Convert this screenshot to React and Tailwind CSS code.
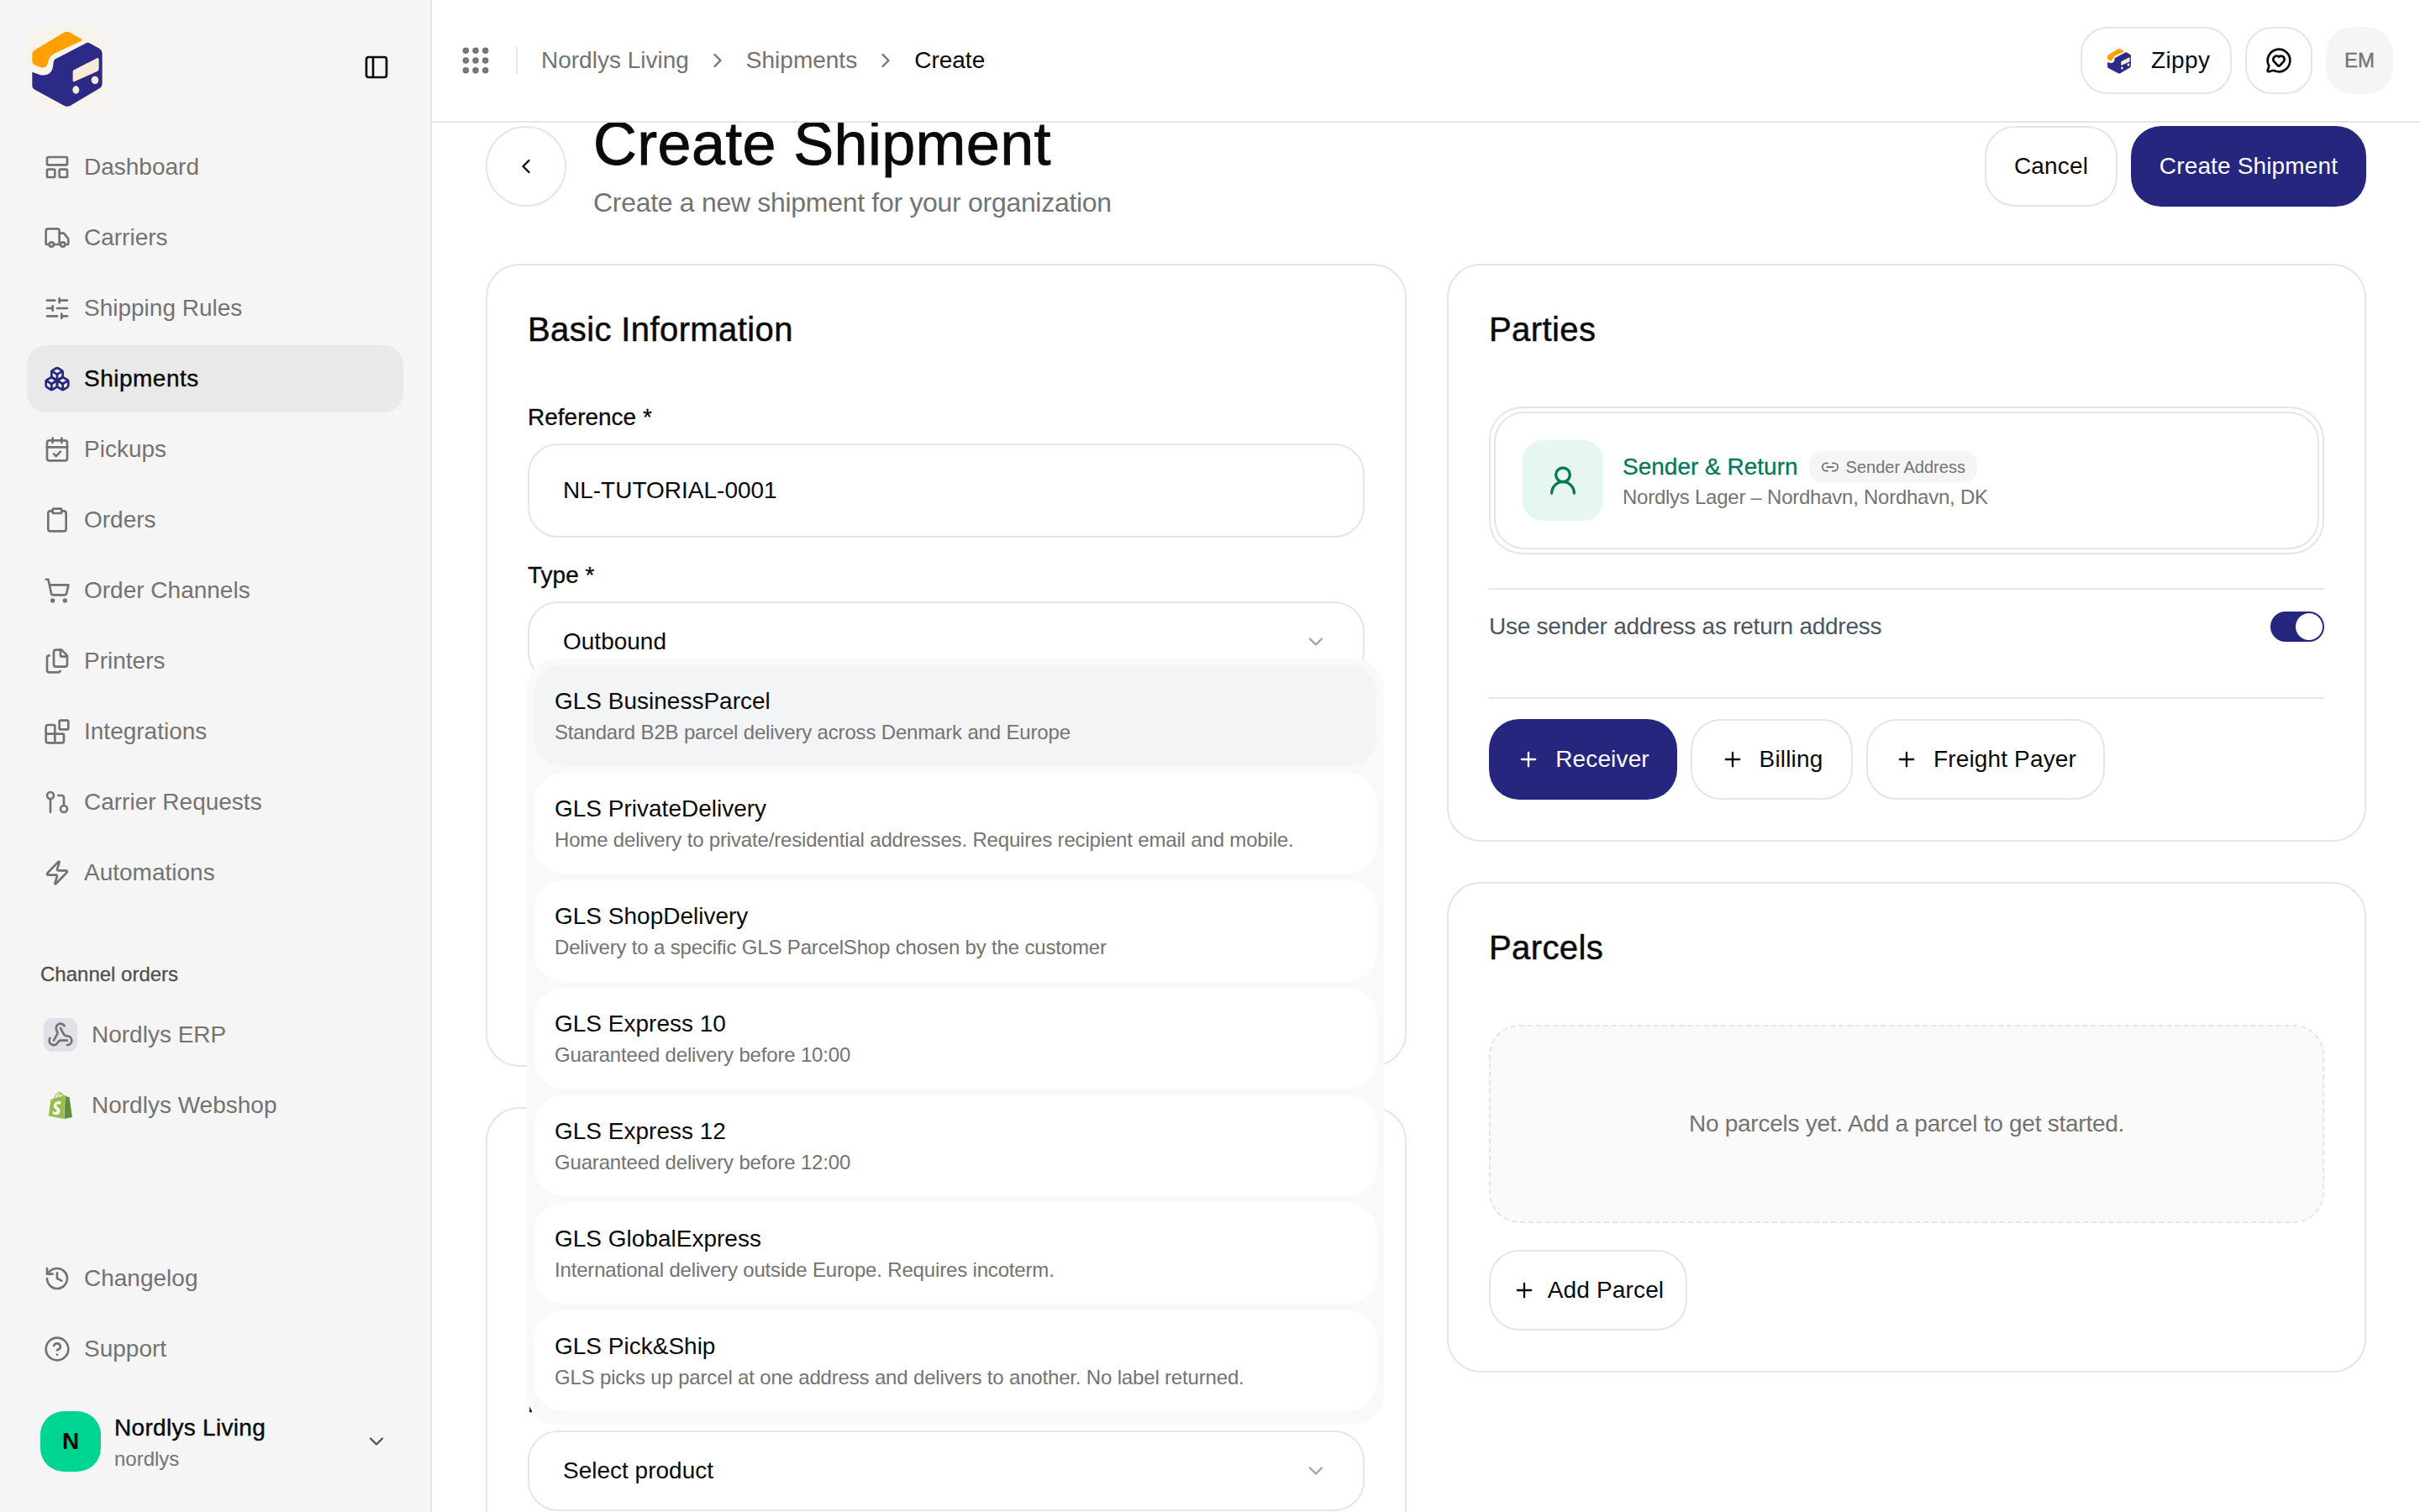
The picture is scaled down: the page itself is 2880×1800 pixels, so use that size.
import {
  LayoutPanelTop, Truck, SlidersHorizontal, Boxes, CalendarCheck, Clipboard, ShoppingCart, Files, Blocks,
  GitPullRequest, Zap, History, CircleHelp, Webhook, PanelLeft, Grip, ChevronRight, ChevronLeft, ChevronDown,
  MessageCircleHeart, UserRound, Link2, Plus,
} from 'lucide-react';

const navItems = [
  { label: 'Dashboard', icon: LayoutPanelTop },
  { label: 'Carriers', icon: Truck },
  { label: 'Shipping Rules', icon: SlidersHorizontal },
  { label: 'Shipments', icon: Boxes, active: true },
  { label: 'Pickups', icon: CalendarCheck },
  { label: 'Orders', icon: Clipboard },
  { label: 'Order Channels', icon: ShoppingCart },
  { label: 'Printers', icon: Files },
  { label: 'Integrations', icon: Blocks },
  { label: 'Carrier Requests', icon: GitPullRequest },
  { label: 'Automations', icon: Zap },
];

const products = [
  { name: 'GLS BusinessParcel', desc: 'Standard B2B parcel delivery across Denmark and Europe', active: true },
  { name: 'GLS PrivateDelivery', desc: 'Home delivery to private/residential addresses. Requires recipient email and mobile.' },
  { name: 'GLS ShopDelivery', desc: 'Delivery to a specific GLS ParcelShop chosen by the customer' },
  { name: 'GLS Express 10', desc: 'Guaranteed delivery before 10:00' },
  { name: 'GLS Express 12', desc: 'Guaranteed delivery before 12:00' },
  { name: 'GLS GlobalExpress', desc: 'International delivery outside Europe. Requires incoterm.' },
  { name: 'GLS Pick&Ship', desc: 'GLS picks up parcel at one address and delivers to another. No label returned.' },
];

function Logo({ className, glow }) {
  return (
    <svg viewBox="36 36 288 288" className={className}>
      {glow && <rect x="36" y="36" width="288" height="288" rx="30" fill="#f8f3ec" />}
      <path d="M55 135 Q55 122 68 116 L168 56 Q178 50 190 56 L232 80 Q235 84 228 87 L138 129 Q116 140 112 160 Q108 186 85 181 L62 171 Q55 167 55 160 Z" fill="#ff9f00" />
      <path d="M135 152 L245 95 Q254 90 262 95 L296 114 Q305 120 305 130 L305 238 Q305 250 295 256 L190 318 Q180 323 170 318 L64 260 Q55 255 55 245 L55 197 L84 208 Q126 214 130 172 Q130 160 135 152 Z" fill="#2d2a87" />
      <path d="M204 190 L286 148 Q293 145 293 152 L293 186 Q293 192 287 195 L206 231 Q200 233 200 227 L200 196 Q200 192 204 190 Z" fill="#f8ecd8" />
      <ellipse cx="211" cy="261" rx="12" ry="14" fill="#f8ecd8" />
      <ellipse cx="279" cy="226" rx="13" ry="14" fill="#f8ecd8" />
    </svg>
  );
}

function ShopifyIcon() {
  return (
    <svg viewBox="0 0 24 24" className="w-[32px] h-[32px]">
      <path fill="#5e8e3e" d="M15.337 23.979l7.216-1.561s-2.604-17.613-2.625-17.73c-.018-.116-.114-.192-.211-.192s-1.929-.136-1.929-.136-1.275-1.274-1.439-1.411c-.045-.037-.075-.057-.121-.074l-.914 21.104h.023z" />
      <path fill="#95bf47" d="M11.71 11.305s-.81-.424-1.774-.424c-1.447 0-1.504.906-1.504 1.141 0 1.232 3.24 1.715 3.24 4.629 0 2.295-1.44 3.76-3.406 3.76-2.354 0-3.54-1.465-3.54-1.465l.646-2.086s1.245 1.066 2.28 1.066c.675 0 .975-.545.975-.932 0-1.619-2.654-1.694-2.654-4.359-.034-2.237 1.571-4.416 4.827-4.416 1.257 0 1.875.361 1.875.361l-.945 2.715-.02.01zM11.17.83c.136 0 .271.038.405.135-.984.465-2.064 1.639-2.508 3.992-.656.213-1.293.405-1.889.578C7.697 3.75 8.951.84 11.17.84V.83zm1.235 2.949v.135c-.754.232-1.583.484-2.394.736.466-1.777 1.333-2.645 2.085-2.971.193.501.309 1.176.309 2.1zm.539-2.234c.694.074 1.141.867 1.429 1.755-.349.114-.735.231-1.158.366v-.252c0-.752-.096-1.371-.271-1.871v.002zm2.992 1.289c-.02 0-.06.021-.078.021s-.289.075-.714.21c-.423-1.233-1.176-2.37-2.508-2.37h-.115C12.135.209 11.669 0 11.265 0 8.159 0 6.675 3.877 6.21 5.846c-1.194.365-2.063.636-2.16.674-.675.213-.694.232-.772.87-.075.462-1.83 14.063-1.83 14.063L15.009 24l.927-21.166z" />
    </svg>
  );
}

function NavItem({ label, icon: Icon, active }) {
  return (
    <div className={`flex items-center gap-4 h-20 px-5 rounded-[24px] text-[28px] ${active ? 'bg-[#e9e9e9] text-[#0a0a0a] tracking-[0.5px] [-webkit-text-stroke:0.4px]' : 'text-[#737373]'}`}>
      <Icon size={32} strokeWidth={2} className={active ? 'text-[#26267e]' : 'text-[#737373]'} />
      <span>{label}</span>
    </div>
  );
}

function Button({ children, primary, className = '' }) {
  return (
    <div className={`flex items-center justify-center h-24 rounded-[36px] text-[28px] tracking-[0.15px] ${primary ? 'bg-[#26267e] text-white' : 'bg-white border-2 border-[#e5e5e5] text-[#0a0a0a]'} ${className}`}>
      {children}
    </div>
  );
}

function Select({ value }) {
  return (
    <div className="flex items-center justify-between h-24 pl-[40px] pr-[42px] rounded-[36px] border-2 border-[#e5e5e5] bg-white text-[28px] text-[#0a0a0a]">
      <span>{value}</span>
      <ChevronDown size={28} strokeWidth={2} className="text-[#a3a3a3]" />
    </div>
  );
}

function Label({ children }) {
  return <div className="h-10 mb-[11px] flex items-center text-[28px] text-[#0a0a0a] [-webkit-text-stroke:0.3px]">{children}</div>;
}

function CardTitle({ children }) {
  return <h2 className="h-14 flex items-center text-[40px] tracking-[0.4px] text-[#0a0a0a] [-webkit-text-stroke:0.5px]">{children}</h2>;
}

export default function App() {
  return (
    <div className="flex w-[2880px] h-[1800px] overflow-hidden bg-white font-['Liberation_Sans',sans-serif] text-[#0a0a0a]">
      {/* sidebar */}
      <aside className="flex flex-col w-[514px] h-full shrink-0 bg-[#f5f5f5] border-r-2 border-[#e5e5e5] pb-[48px]">
        <div className="flex items-center justify-between pt-8 pl-8 pr-[48px]">
          <Logo glow className="w-24 h-24" />
          <PanelLeft size={32} strokeWidth={2} className="text-[#0a0a0a]" />
        </div>
        <nav className="flex flex-col gap-1 mt-[31px] px-8">
          {navItems.map((item) => (
            <NavItem key={item.label} {...item} />
          ))}
        </nav>
        <div className="mt-[65px] pl-[48px] h-8 flex items-center text-[24px] text-[#4f4f4f] [-webkit-text-stroke:0.3px]">Channel orders</div>
        <div className="flex flex-col gap-1 mt-[16px] px-8">
          <div className="flex items-center gap-[17px] h-20 px-5 text-[28px] text-[#737373]">
            <div className="flex items-center justify-center w-10 h-10 rounded-[10px] bg-[#e1e1ea]">
              <Webhook size={32} strokeWidth={2} className="text-[#737373]" />
            </div>
            <span>Nordlys ERP</span>
          </div>
          <div className="flex items-center gap-[17px] h-20 px-5 text-[28px] text-[#737373]">
            <div className="flex items-center justify-center w-10 h-10">
              <ShopifyIcon />
            </div>
            <span>Nordlys Webshop</span>
          </div>
        </div>
        <div className="flex-1" />
        <div className="flex flex-col gap-1 px-8">
          <NavItem label="Changelog" icon={History} />
          <NavItem label="Support" icon={CircleHelp} />
        </div>
        <div className="flex items-center h-[72px] mt-[34px] pl-[48px] pr-[50px]">
          <div className="flex items-center justify-center w-[72px] h-[72px] rounded-[28px] bg-[#00d492] text-[28px] font-bold text-[#0a0a0a]">N</div>
          <div className="ml-[16px] mt-[4px] flex-1">
            <div className="text-[28px] leading-[38px] tracking-[0.3px] text-[#0a0a0a] [-webkit-text-stroke:0.4px]">Nordlys Living</div>
            <div className="text-[24px] leading-[36px] text-[#737373]">nordlys</div>
          </div>
          <ChevronDown size={28} strokeWidth={2} className="text-[#525252]" />
        </div>
      </aside>

      <div className="flex flex-col flex-1 min-w-0 h-full">
        {/* top bar */}
        <header className="flex items-center justify-between h-[146px] shrink-0 border-b-2 border-[#e5e5e5] bg-white pl-[32px] pr-[32px]">
          <div className="flex items-center text-[28px]">
            <Grip size={40} strokeWidth={2.5} className="text-[#737373]" />
            <div className="w-[2px] h-8 bg-[#e5e5e5] ml-[28px] mr-[28px]" />
            <span className="text-[#737373]">Nordlys Living</span>
            <ChevronRight size={28} strokeWidth={2} className="mx-[20px] text-[#737373]" />
            <span className="text-[#737373]">Shipments</span>
            <ChevronRight size={28} strokeWidth={2} className="mx-[20px] text-[#737373]" />
            <span className="text-[#0a0a0a]">Create</span>
          </div>
          <div className="flex items-center gap-4">
            <div className="flex items-center gap-[22px] h-20 w-[180px] pl-[28px] rounded-[32px] border-2 border-[#e5e5e5] text-[28px] tracking-[0.4px]">
              <Logo className="w-8 h-8" />
              <span>Zippy</span>
            </div>
            <div className="flex items-center justify-center w-20 h-20 rounded-[32px] border-2 border-[#e5e5e5]">
              <MessageCircleHeart size={32} strokeWidth={2} className="text-[#0a0a0a]" />
            </div>
            <div className="flex items-center justify-center w-20 h-20 rounded-[32px] bg-[#f5f5f5] text-[24px] text-[#737373] [-webkit-text-stroke:0.4px]">EM</div>
          </div>
        </header>

        {/* scrolled content */}
        <main className="flex-1 min-h-0 overflow-hidden">
          <div className="mt-[-15px] px-16">
            <div className="flex items-center justify-between">
              <div className="flex items-center gap-[32px]">
                <div className="flex items-center justify-center w-24 h-24 rounded-full border-2 border-[#e5e5e5]">
                  <ChevronLeft size={28} strokeWidth={2} className="text-[#0a0a0a]" />
                </div>
                <div>
                  <h1 className="text-[72px] leading-[80px] tracking-[0.3px] text-[#0a0a0a] [-webkit-text-stroke:0.8px]">Create Shipment</h1>
                  <p className="mt-[6px] text-[32px] leading-[48px] tracking-[-0.3px] text-[#737373]">Create a new shipment for your organization</p>
                </div>
              </div>
              <div className="flex items-center gap-4">
                <Button className="w-[158px]">Cancel</Button>
                <Button primary className="w-[280px]">Create Shipment</Button>
              </div>
            </div>

            <div className="grid grid-cols-[1096px_1094px] gap-12 mt-[49px]">
              {/* left column */}
              <div className="flex flex-col gap-12">
                <section className="h-[956px] p-12 rounded-[40px] border-2 border-[#e5e5e5] bg-white">
                  <CardTitle>Basic Information</CardTitle>
                  <div className="mt-[57px]">
                    <Label>Reference *</Label>
                    <div className="flex items-center h-[112px] px-[40px] rounded-[36px] border-2 border-[#e5e5e5] text-[28px]">NL-TUTORIAL-0001</div>
                  </div>
                  <div className="relative mt-[25px]">
                    <Label>Type *</Label>
                    <Select value="Outbound" />
                    {/* open product dropdown */}
                    <div className="absolute left-[-1px] top-[119px] z-10 flex flex-col gap-2 w-[1020px] pt-2 px-2 pb-4 rounded-[36px] bg-[#f8f9fb]">
                      {products.map((p) => (
                        <div key={p.name} className={`flex flex-col justify-center h-[120px] pl-[25px] pr-6 pt-[2px] rounded-[36px] ${p.active ? 'bg-[#f3f4f6]' : 'bg-white'}`}>
                          <div className="text-[28px] leading-[38px] text-[#0a0a0a]">{p.name}</div>
                          <div className="text-[24px] leading-[36px] tracking-[-0.17px] text-[#737373]">{p.desc}</div>
                        </div>
                      ))}
                    </div>
                  </div>
                </section>
                <section className="pt-[332px] px-12 pb-12 rounded-[40px] border-2 border-[#e5e5e5] bg-white">
                  <Label>Product *</Label>
                  <Select value="Select product" />
                </section>
              </div>

              {/* right column */}
              <div className="flex flex-col gap-12">
                <section className="p-12 rounded-[40px] border-2 border-[#e5e5e5] bg-white">
                  <CardTitle>Parties</CardTitle>
                  <div className="mt-[64px] p-1 rounded-[40px] border-2 border-[#e5e5e5]">
                    <div className="flex items-center gap-[23px] h-[164px] px-8 rounded-[36px] border-2 border-[#e5e5e5]">
                      <div className="flex items-center justify-center w-24 h-24 rounded-[24px] bg-[#e6f7f0]">
                        <UserRound size={40} strokeWidth={2} className="text-[#047857]" />
                      </div>
                      <div>
                        <div className="flex items-center gap-[13px] h-[38px] mt-[2px]">
                          <span className="text-[28px] text-[#047857] [-webkit-text-stroke:0.3px]">Sender &amp; Return</span>
                          <span className="flex items-center gap-2 h-[38px] px-[14px] rounded-2xl bg-[#f5f5f5] text-[20px] text-[#737373]">
                            <Link2 size={22} strokeWidth={2} />
                            Sender Address
                          </span>
                        </div>
                        <div className="text-[24px] leading-[34px] tracking-[-0.25px] text-[#737373]">Nordlys Lager – Nordhavn, Nordhavn, DK</div>
                      </div>
                    </div>
                  </div>
                  <div className="mt-[40px] h-[132px] pt-[22px] border-y-2 border-[#e5e5e5]">
                    <div className="flex items-center justify-between h-11">
                      <span className="text-[28px] tracking-[-0.25px] text-[#4b5563]">Use sender address as return address</span>
                      <div className="flex items-center justify-end w-16 h-9 p-[2px] rounded-full bg-[#26267e]">
                        <div className="w-8 h-8 rounded-full bg-white" />
                      </div>
                    </div>
                  </div>
                  <div className="flex gap-4 mt-6">
                    <Button primary className="w-[224px] gap-[18px]"><Plus size={28} strokeWidth={2} />Receiver</Button>
                    <Button className="w-[193px] gap-[18px]"><Plus size={28} strokeWidth={2} />Billing</Button>
                    <Button className="w-[284px] gap-[18px]"><Plus size={28} strokeWidth={2} />Freight Payer</Button>
                  </div>
                </section>
                <section className="p-12 rounded-[40px] border-2 border-[#e5e5e5] bg-white">
                  <CardTitle>Parcels</CardTitle>
                  <div className="flex items-center justify-center h-[236px] mt-[64px] rounded-[36px] border-2 border-dashed border-[#e5e5e5] bg-[#fafafa] text-[28px] tracking-[-0.25px] text-[#737373]">
                    No parcels yet. Add a parcel to get started.
                  </div>
                  <Button className="w-[236px] mt-8 gap-[14px]"><Plus size={28} strokeWidth={2} />Add Parcel</Button>
                </section>
              </div>
            </div>
          </div>
        </main>
      </div>
    </div>
  );
}
